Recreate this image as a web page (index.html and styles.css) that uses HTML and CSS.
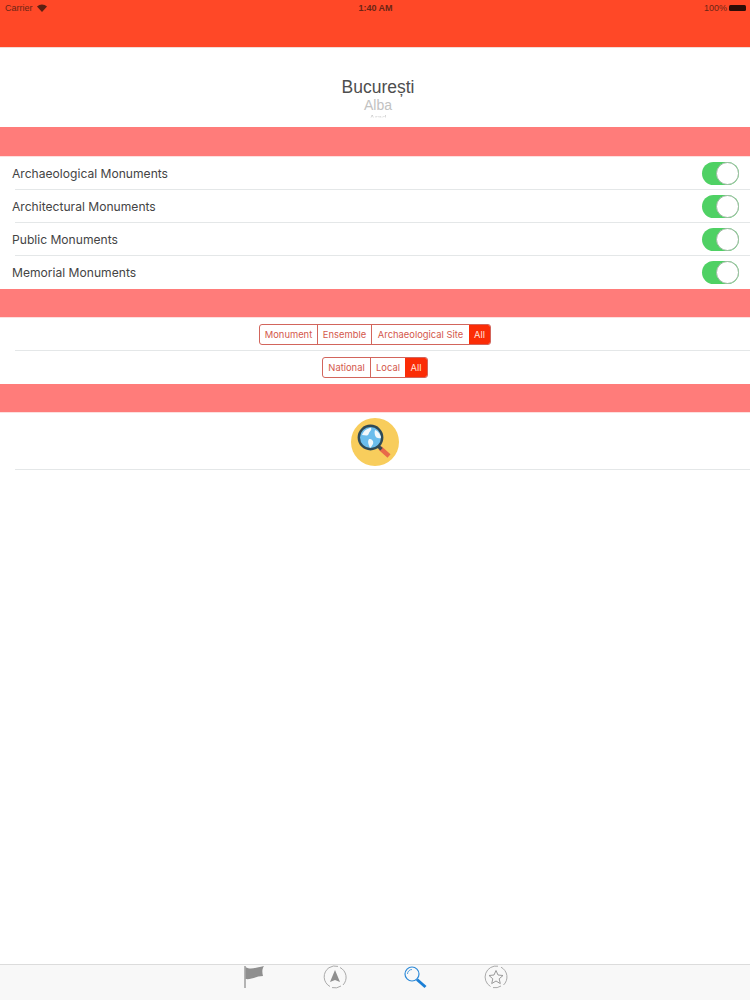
FILE: index.html
```
<!DOCTYPE html>
<html lang="en">
<head>
<meta charset="utf-8">
<title>Monuments</title>
<link rel="stylesheet" href="styles.css">
</head>
<body>
<div class="app">
  <header class="navbar">
    <div class="status">
      <div class="status-left"><span>Carrier</span>
        <svg class="wifi" width="10" height="8" viewBox="0 0 10 8"><path d="M5 8 0 2.600C2.800-.2 7.200-.2 10 2.600Z" fill="#5c2013"/></svg>
      </div>
      <div class="status-time">1:40 AM</div>
      <div class="status-right"><span>100%</span><span class="battery"></span></div>
    </div>
  </header>
  <section class="picker">
    <div class="picker-main">București</div>
    <div class="picker-next">Alba</div>
    <div class="picker-far">Arad</div>
  </section>
  <div class="band"></div>
  <div class="row"><span>Archaeological Monuments</span><span class="switch"><span class="knob"></span></span></div>
  <div class="row"><span>Architectural Monuments</span><span class="switch"><span class="knob"></span></span></div>
  <div class="row"><span>Public Monuments</span><span class="switch"><span class="knob"></span></span></div>
  <div class="row row-last"><span>Memorial Monuments</span><span class="switch"><span class="knob"></span></span></div>
  <div class="band band-short"></div>
  <div class="row row-center">
    <div class="segments"><span class="seg seg-monument">Monument</span><span class="seg seg-ensemble">Ensemble</span><span class="seg seg-site">Archaeological Site</span><span class="seg seg-on seg-all-narrow">All</span></div>
  </div>
  <div class="row row-center row-last">
    <div class="segments"><span class="seg seg-national">National</span><span class="seg seg-local">Local</span><span class="seg seg-on seg-all">All</span></div>
  </div>
  <div class="band band-short"></div>
  <div class="row-search">
    <svg width="48" height="48" viewBox="0 0 48 48">
      <circle cx="24" cy="24" r="24" fill="#f8cd5c"/>
      <path d="M29 30 L38 38" stroke="#e8694a" stroke-width="4.500"/>
      <path d="M27.500 28.500 L30.500 31.200" stroke="#3b4a50" stroke-width="3.500"/>
      <circle cx="19.500" cy="19.500" r="11.700" fill="#6bbdec" stroke="#2f4a56" stroke-width="2.400"/>
      <path d="M11 17c2-5 6-7 9-7 1 2-1 3-2 5-1 4-4 2-7 2ZM18 21c3 0 5 2 4 5-1 2-2 3-3 4-1-3-3-6-1-9ZM24 12c3 1 5 4 6 7 0 2-2 1-3 1-3 0-4-5-3-8Z" fill="#f2f8fb"/>
    </svg>
  </div>
  <main class="filler"></main>
  <nav class="tabbar">
    <svg width="24" height="24" viewBox="0 0 24 24"><path d="M3 1v22" stroke="#8f8f8f" stroke-width="1.300"/><path d="M3.500 2c5 3 9 1 18.500-1-2 3-2 6-1 10-7 0-12 4-17.500 3Z" fill="#8f8f8f"/></svg>
    <svg width="24" height="24" viewBox="0 0 24 24" fill="none"><path d="M12 5 17 17 12 15 7 17Z" fill="#8f8f8f"/><path d="M17 2.500A11 11 0 0 1 20 20M7 21.500A11 11 0 0 1 6 2.700 11 11 0 0 1 15 1.400" stroke="#a0a0a0" stroke-width=".9"/><path d="M18 21A11 11 0 0 1 9 22.600" stroke="#a0a0a0" stroke-width=".9"/></svg>
    <svg width="24" height="24" viewBox="0 0 24 24" fill="none"><circle cx="9" cy="9" r="7" stroke="#2d8ad8" stroke-width="1.200"/><path d="M4.500 9A4.500 4.500 0 0 1 9 4.500" stroke="#2d8ad8" stroke-width=".8"/><path d="M14 14.500 22.500 22" stroke="#1b7fd6" stroke-width="3"/></svg>
    <svg width="24" height="24" viewBox="0 0 24 24" fill="none"><path d="M12 5.500 14 10 19 10.500 15.200 13.800 16.300 18.600 12 16 7.700 18.600 8.800 13.800 5 10.500 10 10Z" stroke="#9a9a9a" stroke-width="1"/><path d="M17 2.200A11 11 0 0 1 19.500 20M6.500 21.500A11 11 0 0 1 14 1.200M17 21A11 11 0 0 1 9 22.600" stroke="#a0a0a0" stroke-width=".9"/></svg>
  </nav>
</div>
</body>
</html>
```
FILE: styles.css
```
* { box-sizing: border-box; }
html, body { margin: 0; padding: 0; background: #fff; }
body { font-family: Inter, "Liberation Sans", sans-serif; }
.app { width: 750px; height: 1000px; display: flex; flex-direction: column; overflow: hidden; }

.navbar { height: 48px; flex: none; background: #ff4827; border-bottom: 1px solid #f3dcd6; }
.status { height: 15px; display: grid; grid-template-columns: 1fr auto 1fr; align-items: center; padding: 0 4px 0 5px; font-family: "Liberation Sans", sans-serif; font-size: 9px; color: #6b2515; }
.status-left { display: flex; align-items: center; gap: 4px; }
.status-time { font-weight: bold; color: #6b2515; }
.status-right { display: flex; justify-content: flex-end; align-items: center; gap: 2px; }
.battery { width: 17px; height: 6px; border-radius: 1.500px; background: #2c0d07; }

.picker { height: 79px; flex: none; display: flex; flex-direction: column; align-items: center; padding: 29px 0 0 6px; font-family: "Liberation Sans", sans-serif; }
.picker-main { font-size: 17.500px; line-height: 20px; color: #4e4e4e; }
.picker-next { font-size: 14px; line-height: 15px; margin-top: 1px; color: #c2c2c2; }
.picker-far { font-size: 8px; line-height: 10px; height: 10px; color: #c8c8c8; -webkit-mask-image: linear-gradient(#000 30%, transparent 55%); mask-image: linear-gradient(#000 30%, transparent 55%); }

.band { height: 30px; flex: none; background: #ff7c7a; border-bottom: 1px solid #fde0df; }
.band-short { height: 29px; }

.row { height: 33px; flex: none; display: flex; align-items: center; justify-content: space-between; padding-left: 12px; padding-right: 11px; font-size: 12.100px; color: #444; background: linear-gradient(#e4e7e8, #e4e7e8) 15px 100% / 100% 1px no-repeat; }
.row-last { background: none; }
.row-center { justify-content: center; padding: 0; }

.switch { width: 37px; height: 23px; border-radius: 12px; background: #4fd164; display: flex; justify-content: flex-end; align-items: center; }
.knob { width: 23px; height: 23px; border-radius: 50%; background: #fff; border: 1px solid #9fb8a3; }

.segments { display: flex; height: 21px; border-radius: 3px; border: 1px solid #d2655c; overflow: hidden; font-size: 9.400px; color: #d4584c; }
.seg { display: flex; align-items: center; justify-content: center; border-left: 1px solid #d2655c; white-space: nowrap; }
.seg:first-child { border-left: 0; }
.seg-on { background: #fb2c06; color: #ffe3dc; border-left: 0; }
.seg-monument { width: 57px; }
.seg-ensemble { width: 54px; }
.seg-site { width: 98px; }
.seg-all { width: 22px; }
.seg-all-narrow { width: 21px; }
.seg-national { width: 47px; }
.seg-local { width: 35px; }

.row-search { height: 57px; flex: none; display: flex; align-items: center; justify-content: center; background: linear-gradient(#e4e7e8, #e4e7e8) 15px 100% / 100% 1px no-repeat; }

.filler { flex: 1; }

.tabbar { height: 36px; flex: none; background: #f8f8f8; border-top: 1px solid #dcdcdc; display: flex; justify-content: center; gap: 56.500px; }
```
